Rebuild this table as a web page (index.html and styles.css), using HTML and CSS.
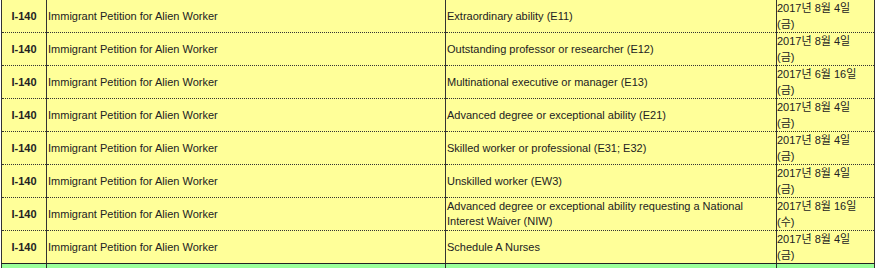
FILE: index.html
```html
<!DOCTYPE html>
<html lang="ko">
<head>
<meta charset="utf-8">
<title>I-140 Processing Dates</title>
<link rel="stylesheet" href="styles.css">
</head>
<body>
<table class="dates">
  <colgroup>
    <col class="c-form">
    <col class="c-title">
    <col class="c-cat">
    <col class="c-date">
  </colgroup>
  <tbody>
    <tr class="row">
      <td class="form">I-140</td>
      <td class="title">Immigrant Petition for Alien Worker</td>
      <td class="cat">Extraordinary ability (E11)</td>
      <td class="date">2017년 8월 4일<br>(금)</td>
    </tr>
    <tr class="row">
      <td class="form">I-140</td>
      <td class="title">Immigrant Petition for Alien Worker</td>
      <td class="cat">Outstanding professor or researcher (E12)</td>
      <td class="date">2017년 8월 4일<br>(금)</td>
    </tr>
    <tr class="row">
      <td class="form">I-140</td>
      <td class="title">Immigrant Petition for Alien Worker</td>
      <td class="cat">Multinational executive or manager (E13)</td>
      <td class="date">2017년 6월 16일<br>(금)</td>
    </tr>
    <tr class="row">
      <td class="form">I-140</td>
      <td class="title">Immigrant Petition for Alien Worker</td>
      <td class="cat">Advanced degree or exceptional ability (E21)</td>
      <td class="date">2017년 8월 4일<br>(금)</td>
    </tr>
    <tr class="row">
      <td class="form">I-140</td>
      <td class="title">Immigrant Petition for Alien Worker</td>
      <td class="cat">Skilled worker or professional (E31; E32)</td>
      <td class="date">2017년 8월 4일<br>(금)</td>
    </tr>
    <tr class="row">
      <td class="form">I-140</td>
      <td class="title">Immigrant Petition for Alien Worker</td>
      <td class="cat">Unskilled worker (EW3)</td>
      <td class="date">2017년 8월 4일<br>(금)</td>
    </tr>
    <tr class="row">
      <td class="form">I-140</td>
      <td class="title">Immigrant Petition for Alien Worker</td>
      <td class="cat">Advanced degree or exceptional ability requesting a National Interest Waiver (NIW)</td>
      <td class="date">2017년 8월 16일<br>(수)</td>
    </tr>
    <tr class="row last">
      <td class="form">I-140</td>
      <td class="title">Immigrant Petition for Alien Worker</td>
      <td class="cat">Schedule A Nurses</td>
      <td class="date">2017년 8월 4일<br>(금)</td>
    </tr>
    <tr class="row green">
      <td class="form"></td>
      <td class="title"></td>
      <td class="cat"></td>
      <td class="date"></td>
    </tr>
  </tbody>
</table>
</body>
</html>
```
FILE: styles.css
```css
html, body {
  margin: 0;
  padding: 0;
  background: #ffffff;
  overflow: hidden;
}

.dates {
  margin: -1px 0 0 1px;
  width: 873px;
  table-layout: fixed;
  border-collapse: collapse;
  font-family: "Liberation Sans", Arial, "Noto Sans CJK KR", sans-serif;
  font-size: 11px;
  color: #222;
}

.c-form { width: 45px; }
.c-title { width: 399px; }
.c-cat { width: 331px; }
.c-date { width: 98px; }

.row td {
  background: #ffff99;
  border-left: 1px solid #333;
  border-right: 1px solid #333;
  border-top: 1px dotted #333;
  border-bottom: 1px dotted #333;
  padding: 0 1px;
  height: 32px;
  line-height: 15px;
  vertical-align: middle;
  text-align: left;
}

.row.last td {
  border-bottom: 1px solid #222;
}

.row.green td {
  background: #99ff99;
  border-top: 1px solid #222;
}

.row .form {
  font-weight: bold;
  text-align: center;
}

.row .date {
  line-height: 16px;
  padding: 0;
  vertical-align: top;
}
```
